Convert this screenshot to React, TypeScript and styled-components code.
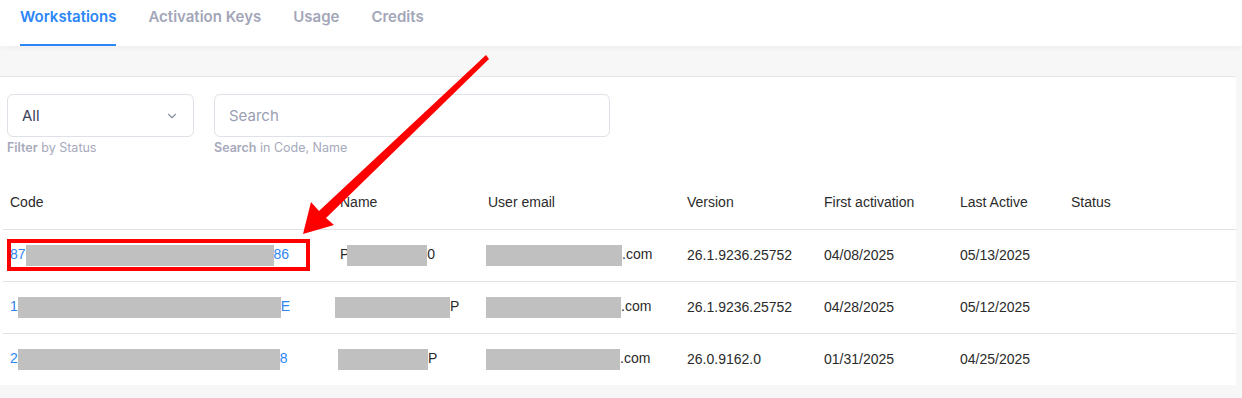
import styled, { createGlobalStyle } from 'styled-components';

const GlobalStyle = createGlobalStyle`
  html, body {
    margin: 0;
    padding: 0;
    background: #f7f7f8;
  }
  * {
    box-sizing: border-box;
  }
`;

interface IRow {
  code: [string, number, string];
  name: [string, number, string, number];
  email: number;
  version: string;
  first: string;
  last: string;
}

const rows: IRow[] = [
  {
    code: ['87', 248, '86'],
    name: ['P', 80, '0', -2],
    email: 136,
    version: '26.1.9236.25752',
    first: '04/08/2025',
    last: '05/13/2025',
  },
  {
    code: ['1', 263, 'E'],
    name: ['', 115, 'P', -5],
    email: 135,
    version: '26.1.9236.25752',
    first: '04/28/2025',
    last: '05/12/2025',
  },
  {
    code: ['2', 262, '8'],
    name: ['', 90, 'P', -2],
    email: 134,
    version: '26.0.9162.0',
    first: '01/31/2025',
    last: '04/25/2025',
  },
];

const tabs = ['Workstations', 'Activation Keys', 'Usage', 'Credits'];

const App = () => {
  return (
    <Page>
      <GlobalStyle />
      <TabBar>
        {tabs.map((t, i) => (
          <Tab key={t} active={i === 0}>
            {t}
          </Tab>
        ))}
      </TabBar>
      <Band />
      <Card>
        <Filters>
          <Field>
            <Select>
              <span>All</span>
              <svg width="14" height="14" viewBox="0 0 24 24" fill="none">
                <path
                  d="M6 9l6 6 6-6"
                  stroke="#8a8fa3"
                  strokeWidth="2"
                  strokeLinecap="round"
                  strokeLinejoin="round"
                />
              </svg>
            </Select>
            <Helper>
              <b>Filter</b> by Status
            </Helper>
          </Field>
          <Field>
            <SearchBox>Search</SearchBox>
            <Helper>
              <b>Search</b> in Code, Name
            </Helper>
          </Field>
        </Filters>
        <Table>
          <thead>
            <tr>
              <Th w={330}>Code</Th>
              <Th w={148}>Name</Th>
              <Th w={199}>User email</Th>
              <Th w={137}>Version</Th>
              <Th w={136}>First activation</Th>
              <Th w={111}>Last Active</Th>
              <Th>Status</Th>
            </tr>
          </thead>
          <tbody>
            {rows.map((r, i) => (
              <tr key={i}>
                <Td>
                  <CodeLink>
                    {r.code[0]}
                    <Redact w={r.code[1]} />
                    {r.code[2]}
                  </CodeLink>
                </Td>
                <Td>
                  {r.name[0]}
                  <Redact w={r.name[1]} shift={r.name[3]} />
                  {r.name[2]}
                </Td>
                <Td>
                  <Redact w={r.email} shift={-2} />
                  .com
                </Td>
                <Td>{r.version}</Td>
                <Td>{r.first}</Td>
                <Td>{r.last}</Td>
                <Td />
              </tr>
            ))}
          </tbody>
        </Table>
      </Card>
      <Highlight />
      <Arrow width="1242" height="398" viewBox="0 0 1242 398">
        <polygon
          points="486,55 489,59 326,218 334,225 303,234 311,202 319,211"
          fill="#ff0000"
        />
      </Arrow>
    </Page>
  );
};

export default App;

const Page = styled.div`
  position: relative;
  width: 1242px;
  height: 398px;
  overflow: hidden;
  background: #f7f7f8;
`;

const TabBar = styled.div`
  display: flex;
  gap: 32px;
  height: 46px;
  padding-left: 20px;
  background: #ffffff;
  box-shadow: 0 2px 6px rgba(0, 0, 0, 0.04);
  position: relative;
  z-index: 1;
`;

const Tab = styled.div<{ active?: boolean }>`
  font-family: Inter, 'Noto Sans', sans-serif;
  font-size: 15px;
  font-weight: 600;
  line-height: 34px;
  color: ${props => (props.active ? '#2b86f7' : '#a3a6b8')};
  border-bottom: 2px solid
    ${props => (props.active ? '#2b86f7' : 'transparent')};
  height: 46px;
`;

const Band = styled.div`
  height: 30px;
  background: #f7f7f8;
`;

const Card = styled.div`
  background: #ffffff;
  border-top: 1px solid #e6e6ea;
  margin-right: 6px;
  height: 309px;
  padding-top: 17px;
`;

const Filters = styled.div`
  display: flex;
  gap: 20px;
  padding-left: 7px;
`;

const Field = styled.div`
  display: flex;
  flex-direction: column;
  gap: 3px;
`;

const Select = styled.div`
  width: 187px;
  height: 43px;
  border: 1px solid #dfe1e8;
  border-radius: 6px;
  display: flex;
  align-items: center;
  justify-content: space-between;
  padding: 0 14px 0 14px;
  font-family: Inter, 'Noto Sans', sans-serif;
  font-size: 15px;
  color: #3c4257;
`;

const SearchBox = styled.div`
  width: 396px;
  height: 43px;
  border: 1px solid #dfe1e8;
  border-radius: 6px;
  display: flex;
  align-items: center;
  padding-left: 14px;
  font-family: Inter, 'Noto Sans', sans-serif;
  font-size: 15px;
  color: #9a9fb2;
`;

const Helper = styled.div`
  font-family: Inter, 'Noto Sans', sans-serif;
  font-size: 12.5px;
  color: #a6a9bb;
  line-height: 16px;

  b {
    font-weight: 600;
  }
`;

const Table = styled.table`
  margin: 19px 0 0 3px;
  width: 1233px;
  border-collapse: collapse;
  table-layout: fixed;
  font-family: 'Liberation Sans', Arial, sans-serif;
  font-size: 14px;
  color: #2b2b2b;

  tr {
    border-bottom: 1px solid #e2e2e2;
  }
  tbody tr:last-child {
    border-bottom: none;
  }
`;

const Th = styled.th<{ w?: number }>`
  width: ${props => (props.w ? `${props.w}px` : 'auto')};
  height: 54px;
  padding: 0 0 0 7px;
  text-align: left;
  font-weight: 400;
  vertical-align: middle;
`;

const Td = styled.td`
  height: 52px;
  padding: 0 0 0 7px;
  white-space: nowrap;
  vertical-align: middle;
`;

const CodeLink = styled.span`
  color: #2f86f0;
`;

const Redact = styled.span<{ w: number; shift?: number }>`
  display: inline-block;
  width: ${props => props.w}px;
  height: 21px;
  margin-left: ${props => props.shift || 0}px;
  background: #c0c0c0;
  vertical-align: middle;
`;

const Highlight = styled.div`
  position: absolute;
  left: 7px;
  top: 239px;
  width: 303px;
  height: 32px;
  border: 4px solid #ff0000;
`;

const Arrow = styled.svg`
  position: absolute;
  left: 0;
  top: 0;
  pointer-events: none;
`;
